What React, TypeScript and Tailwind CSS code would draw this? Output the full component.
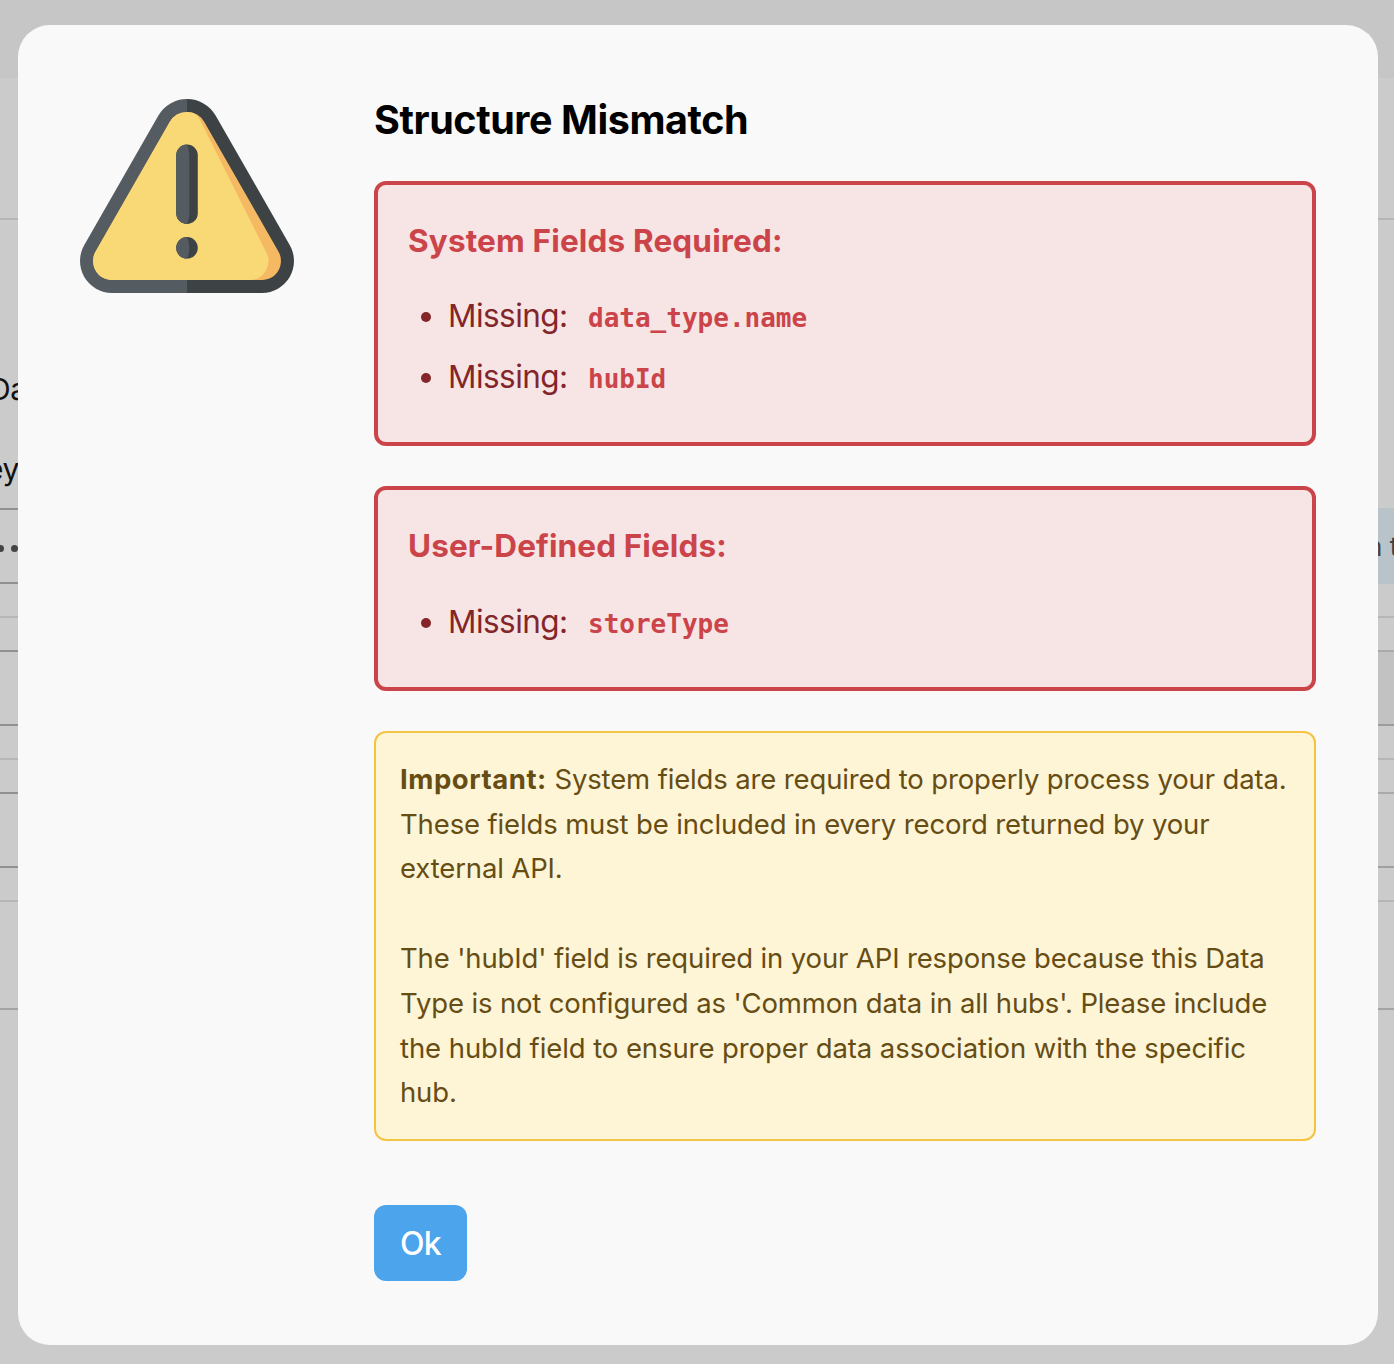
import React from "react";

type Row = { h: string; leftCls?: string; rightCls?: string; left?: React.ReactNode; right?: React.ReactNode };

const light = "border-b-2 border-[#b6b6b6]";
const dark = "border-b-2 border-[#919191]";

const rows: Row[] = [
  { h: "h-[78px] bg-[#c6c6c6]" },
  { h: "h-[142px]", leftCls: light, rightCls: light },
  { h: "h-[128px]" },
  { h: "h-[80px]", left: <span className="-ml-[11px] pt-[2px] text-[30px] tracking-[-0.5px] text-[#111]">Da</span> },
  { h: "h-[80px]", left: <span className="-ml-[14px] pt-[2px] text-[30px] tracking-[-0.5px] text-[#111]">ey</span> },
  {
    h: "h-[76px]",
    leftCls: "border-y-2 border-[#919191]",
    left: (
      <span className="-ml-[3px] flex gap-[7px] pt-[5px]">
        <i className="size-[7px] shrink-0 rounded-full bg-[#444]" />
        <i className="size-[7px] shrink-0 rounded-full bg-[#444]" />
      </span>
    ),
    rightCls: "bg-[#b8c4ca]",
    right: <span className="-ml-[11px] text-[26px] text-[#3f4244]">n t</span>,
  },
  { h: "h-[34px]", leftCls: light, rightCls: light },
  { h: "h-[34px]", leftCls: dark, rightCls: "border-b-2 border-[#aaaaaa]" },
  { h: "h-[74px]", leftCls: dark, rightCls: "border-b-2 border-[#9c9c9c] bg-[#c2c2c2]" },
  { h: "h-[34px]", leftCls: light, rightCls: light },
  { h: "h-[34px]", leftCls: dark, rightCls: "border-b-2 border-[#aaaaaa]" },
  { h: "h-[74px]", leftCls: dark, rightCls: "border-b-2 border-[#a0a0a0]" },
  { h: "h-[34px]", leftCls: light, rightCls: light },
  { h: "h-[108px]", leftCls: "border-b-2 border-[#a4a4a4]", rightCls: "border-b-2 border-[#a4a4a4]" },
];

function Backdrop() {
  return (
    <div className="h-full w-full bg-[#cbcbcb]">
      {rows.map((r, i) => (
        <div key={i} className={"flex justify-between " + r.h}>
          <div className={"flex w-[18px] items-center whitespace-nowrap " + (r.leftCls ?? "")}>{r.left}</div>
          <div className={"flex w-4 items-center whitespace-nowrap " + (r.rightCls ?? "")}>{r.right}</div>
        </div>
      ))}
    </div>
  );
}

function WarningIcon() {
  return (
    <svg viewBox="0 0 214 194" className="h-[194px] w-[214px]">
      <path d="M107 0A33 33 0 0 0 78.400 16.500L4.300 146A32 32 0 0 0 32 194H107Z" fill="#545b61" />
      <path d="M107 0A33 33 0 0 1 135.600 16.500L209.700 146A32 32 0 0 1 182 194H107Z" fill="#3d4245" />
      <path d="M107 13A20 20 0 0 0 89.700 23L15.600 152.500A19 19 0 0 0 32 181H182A19 19 0 0 0 198.400 152.500L124.300 23A20 20 0 0 0 107 13Z" fill="#f4b962" />
      <path d="M107 13A20 20 0 0 0 89.700 23L15.600 152.500A19 19 0 0 0 32 181H169A19 19 0 0 0 185.800 152.500L121 23Q118 16 113.500 14.100Q110.500 13 107 13Z" fill="#f9d976" />
      <rect x="96.200" y="45.500" width="21.600" height="79.500" rx="10.800" fill="#3d4245" />
      <circle cx="107" cy="148.800" r="10.800" fill="#3d4245" />
      <path d="M107 45.500A10.800 10.800 0 0 0 96.200 56.300V114.200A10.800 10.800 0 0 0 107 125Q109.300 121 109.300 114.200V56.300Q109.300 50 107 45.500Z" fill="#545b61" />
      <path d="M107 138A10.800 10.800 0 0 0 107 159.600Q109.300 155 109.300 148.800Q109.300 143 107 138Z" fill="#545b61" />
    </svg>
  );
}

function ErrorBox({ title, fields, className, listClass }: { title: React.ReactNode; fields: string[]; className: string; listClass: string }) {
  return (
    <section className={"rounded-xl border-4 border-[#cb444a] bg-[#f7e5e5] px-[30px] pt-9 " + className}>
      {title}
      <ul className={"flex flex-col gap-[21px] text-[#842529] " + listClass}>
        {fields.map((f) => (
          <li key={f} className="flex h-10 items-center">
            <i className="mr-[17px] ml-[13px] size-[10px] rounded-full bg-[#842529]" />
            <span className="w-[120px] pb-[2px] text-[31.500px] leading-10 tracking-[-0.550px]">Missing:</span>
            <code className="ml-5 pt-[2px] font-['DejaVu_Sans_Mono',monospace] text-[26px] leading-9 font-bold text-[#cb444a]">{f}</code>
          </li>
        ))}
      </ul>
    </section>
  );
}

export default function App() {
  return (
    <div className="relative h-[1364px] w-[1394px] overflow-hidden font-['Inter',sans-serif]">
      <Backdrop />
      <div className="absolute top-[25px] left-[18px] flex h-[1320px] w-[1360px] rounded-[32px] bg-[#f9f9f9]">
        <div className="ml-[62px] w-[294px] shrink-0 pt-[74px]">
          <WarningIcon />
        </div>
        <main className="w-[942px] pt-[70px]">
          <h1 className="h-[50px] whitespace-nowrap text-[39.500px] leading-[50px] font-bold tracking-[-0.420px] text-black">Structure Mismatch</h1>
          <ErrorBox
            className="mt-9 h-[265px]"
            listClass="mt-9"
            title={<h2 className="h-10 whitespace-nowrap text-[31.500px] leading-10 font-bold tracking-[0.160px] text-[#cb444a]">System Fields Required:</h2>}
            fields={["data_type.name", "hubId"]}
          />
          <ErrorBox
            className="mt-10 h-[205px]"
            listClass="mt-[37px]"
            title={<h2 className="h-10 whitespace-nowrap text-[31.500px] leading-10 font-bold tracking-[0.100px] text-[#cb444a]">User-Defined Fields:</h2>}
            fields={["storeType"]}
          />
          <section className="mt-10 h-[410px] whitespace-nowrap rounded-xl border-2 border-[#f5c344] bg-[#fef4d6] px-6 pt-[23.800px] text-[27.500px] leading-[44.800px] tracking-[-0.140px] text-[#664d14]">
            <p><b className="tracking-[0.550px]">Important:</b> System fields are required to properly process your data.</p>
            <p>These fields must be included in every record returned by your</p>
            <p>external API.</p>
            <p className="mt-[44.800px]">The 'hubId' field is required in your API response because this Data</p>
            <p>Type is not configured as 'Common data in all hubs'. Please include</p>
            <p className="tracking-[-0.080px]">the hubId field to ensure proper data association with the specific</p>
            <p>hub.</p>
          </section>
          <button className="mt-16 flex h-[76px] w-[93px] items-center justify-center rounded-xl bg-[#4ba4ec] pt-[2px] text-[32px] font-medium tracking-[-0.800px] text-white">Ok</button>
        </main>
      </div>
    </div>
  );
}
